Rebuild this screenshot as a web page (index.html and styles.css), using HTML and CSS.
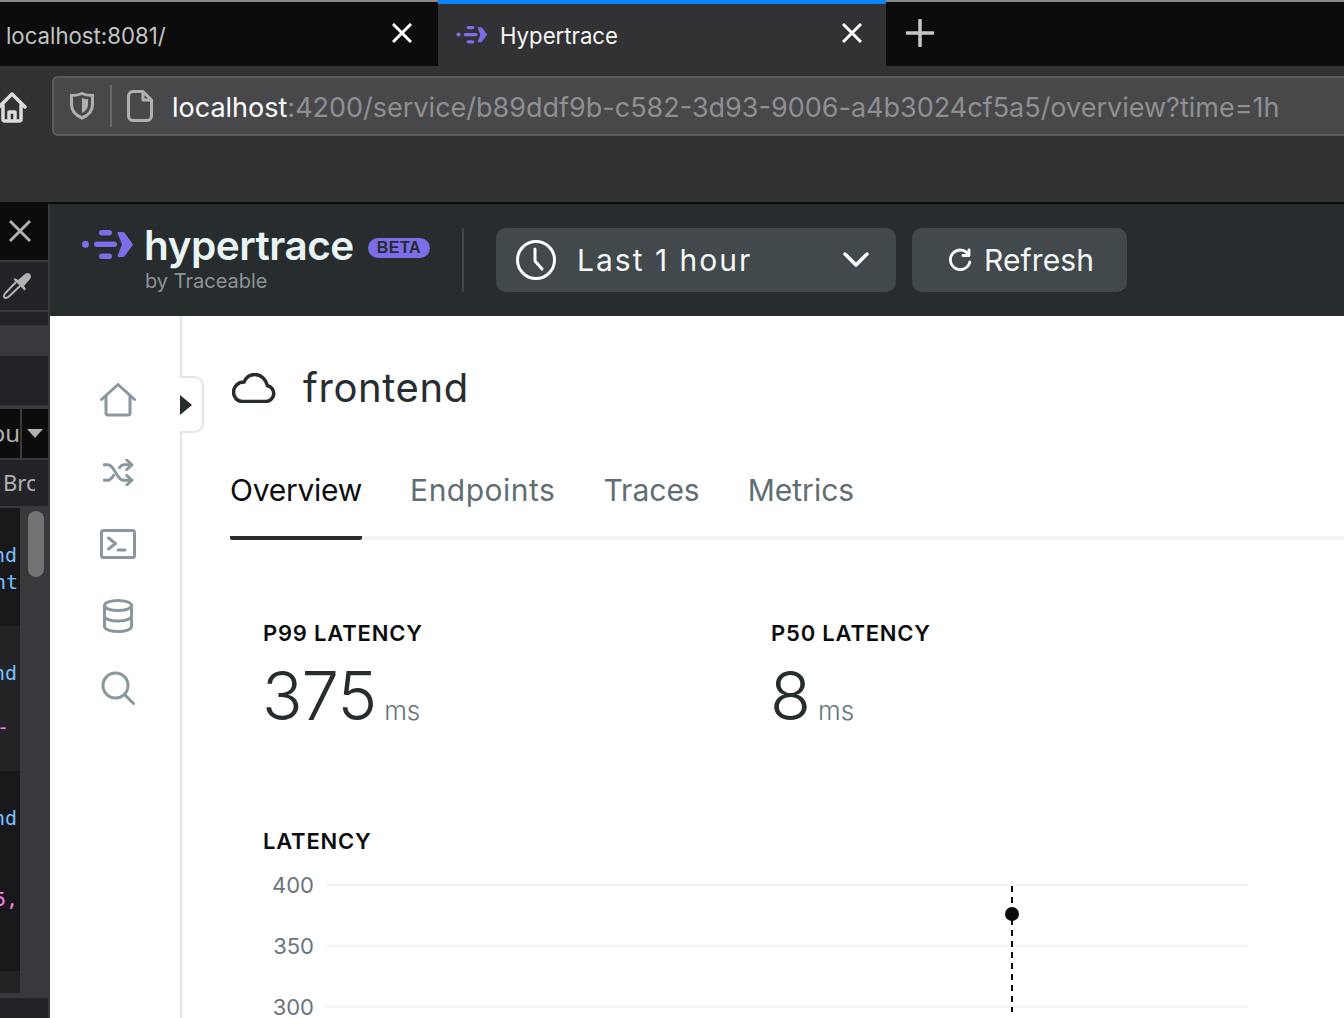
FILE: index.html
```html
<!DOCTYPE html>
<html lang="en">
<head>
<meta charset="utf-8">
<title>Hypertrace</title>
<link rel="stylesheet" href="styles.css">
</head>
<body>
<svg class="defs" width="0" height="0" aria-hidden="true">
  <symbol id="logo" viewBox="0 0 52 30">
    <circle cx="3.5" cy="14.3" r="3.5"/>
    <rect x="17" y="0" width="13" height="5.4" rx="2.7"/>
    <rect x="12" y="11.6" width="23" height="5.4" rx="2.7"/>
    <rect x="17" y="23.6" width="13" height="5.4" rx="2.7"/>
    <path d="M36.5 3h5l8.5 11.5-8.5 11.5h-5l4.500-11.500z" stroke-width="2" stroke-linejoin="round" stroke="currentColor"/>
  </symbol>
</svg>

<header class="tabbar">
  <div class="tab">
    <span class="tab-title tab-title-dim">localhost:8081/</span>
    <svg class="tab-close" viewBox="0 0 20 20"><path d="M1 1l18 18M19 1L1 19"/></svg>
  </div>
  <div class="tab tab-active">
    <svg class="tab-logo"><use href="#logo"/></svg>
    <span class="tab-title">Hypertrace</span>
    <svg class="tab-close" viewBox="0 0 20 20"><path d="M1 1l18 18M19 1L1 19"/></svg>
  </div>
  <svg class="tab-new" viewBox="0 0 28 28"><path d="M14 1v26M1 14h26"/></svg>
</header>

<div class="toolbar">
  <svg class="tool-home" viewBox="0 0 30 32"><path d="M2 16L15 3l13 13M6 14v14a2 2 0 0 0 2 2h14a2 2 0 0 0 2-2V14M12 30v-9h6v9"/></svg>
  <div class="urlbar">
    <svg class="url-shield" viewBox="0 0 24 28"><path d="M12 1.500c3 1.500 6.500 2 10.500 2v9c0 7-4.500 11-10.500 13.500C6 23.500 1.500 19.500 1.500 12.500v-9c4 0 7.500-.5 10.500-2z" fill="none"/><path d="M12 6c2 .8 4 1.200 6 1.200v5.300c0 4-2.500 6.800-6 8.500z" class="url-shield-fill"/></svg>
    <span class="url-sep"></span>
    <svg class="url-page" viewBox="0 0 26 32"><path d="M16 1.500H6A4.500 4.500 0 0 0 1.500 6v20A4.500 4.500 0 0 0 6 30.500h14a4.500 4.500 0 0 0 4.500-4.500V10zM16 1.500V10h8.500"/></svg>
    <div class="url-text"><span class="url-host">localhost</span>:4200/service/b89ddf9b-c582-3d93-9006-a4b3024cf5a5/overview?time=1h</div>
  </div>
</div>

<div class="viewport">
  <aside class="devtools">
    <div class="dt-close">
      <svg viewBox="0 0 24 24"><path d="M2 2l20 20M22 2L2 22"/></svg>
    </div>
    <div class="dt-picker">
      <svg viewBox="0 0 28 28"><path d="M13 10L3 20.500c-2 2-2.500 4-1.500 5s3 .5 5-1.500L17 14" fill="none"/><path d="M10.500 7.500l1.500-1.500 3 2 7-6c2-1.500 4-1 5 0s1.500 3 0 5l-6 7 2 3-1.500 1.500z" class="dt-picker-fill"/></svg>
    </div>
    <div class="dt-strip"></div>
    <div class="dt-selected"></div>
    <div class="dt-empty"></div>
    <div class="dt-tools">
      <span class="dt-tool-text"><span>ou</span></span>
      <span class="dt-tool-caret"><i></i></span>
    </div>
    <div class="dt-label"><span class="dt-label-text">Bro</span></div>
    <div class="dt-code">
      <div class="dt-lines">
        <div class="dt-block dt-block-dark">
          <div class="ln ln-over blue">nd-</div>
          <div class="ln blue">nt</div>
        </div>
        <div class="dt-block dt-block-light">
          <div class="ln ln-over blue">nd-</div>
          <div class="ln">&nbsp;</div>
          <div class="ln ln-dash pink">-</div>
        </div>
        <div class="dt-block dt-block-dark dt-block-tall">
          <div class="ln ln-over blue">nd-</div>
          <div class="ln">&nbsp;</div>
          <div class="ln">&nbsp;</div>
          <div class="ln pink">5,</div>
        </div>
        <div class="dt-block-end"></div>
      </div>
      <div class="dt-scroll"><div class="dt-thumb"></div></div>
    </div>
    <div class="dt-foot"></div>
  </aside>

  <div class="app">
    <div class="app-header">
      <div class="brand">
        <svg class="brand-logo"><use href="#logo"/></svg>
        <div class="brand-text">
          <div class="brand-row">
            <span class="brand-name">hypertrace</span>
            <span class="brand-beta">BETA</span>
          </div>
          <div class="brand-by">by Traceable</div>
        </div>
      </div>
      <span class="header-sep"></span>
      <button class="pill pill-time">
        <svg class="pill-clock" viewBox="0 0 40 40"><circle cx="20" cy="20" r="18.500"/><path d="M19 9v12l7 8"/></svg>
        <span class="pill-label">Last 1 hour</span>
        <svg class="pill-chevron" viewBox="0 0 26 16"><path d="M2 2l11 11L24 2"/></svg>
      </button>
      <button class="pill pill-refresh">
        <svg class="pill-refresh-icon" viewBox="0 0 24 24"><path d="M20.500 6.500A9.800 9.800 0 1 0 21.800 14M21 2v5.500h-6"/></svg>
        <span class="pill-label">Refresh</span>
      </button>
    </div>

    <div class="app-body">
      <nav class="sidenav">
        <a class="nav-item"><svg viewBox="0 0 36 34"><path d="M1.500 16.500L18 1.500l16.500 15M6 13v17a2 2 0 0 0 2 2h20a2 2 0 0 0 2-2V13"/></svg></a>
        <a class="nav-item"><svg class="nav-shuffle" viewBox="0 0 32 28"><path d="M1 6h4c7 0 9 16 16 16h8M1 22h4c2.500 0 4-2 6-5M17 9c1.500-2 2.500-3 4.500-3H29M24.500 1L30 6l-5.500 5M24.500 17l5.500 5-5.500 5"/></svg></a>
        <a class="nav-item"><svg viewBox="0 0 36 30"><rect x="1.500" y="1.500" width="33" height="27" rx="2"/><path d="M8.500 9l7 5.500-7 5.500M18 21h7"/></svg></a>
        <a class="nav-item"><svg viewBox="0 0 30 34"><ellipse cx="15" cy="6.500" rx="13.500" ry="5"/><path d="M1.500 6.500v21c0 2.800 6 5 13.500 5s13.500-2.200 13.500-5v-21M1.500 17c0 2.800 6 5 13.500 5s13.500-2.200 13.500-5"/></svg></a>
        <a class="nav-item"><svg viewBox="0 0 34 34"><circle cx="14.500" cy="14.500" r="12.500"/><path d="M23.500 23.500L32.500 32.500"/></svg></a>
        <button class="nav-toggle" aria-label="Expand"><i></i></button>
      </nav>

      <main class="content">
        <div class="title-row">
          <svg class="title-icon" viewBox="0 0 44 30"><path d="M10 28.500h24a8 8 0 0 0 1.500-15.800C34 6.500 29 1.500 23 1.500c-5 0-9 3-11 7.500C6 9 1.500 13.500 1.500 19s4 9.500 8.500 9.500z"/></svg>
          <h1 class="title">frontend</h1>
        </div>

        <div class="tabs">
          <a class="tab-link tab-link-on">Overview</a>
          <a class="tab-link tab-link-wide">Endpoints</a>
          <a class="tab-link">Traces</a>
          <a class="tab-link">Metrics</a>
        </div>

        <div class="metrics">
          <section class="metric">
            <h2 class="card-title">P99 LATENCY</h2>
            <div class="metric-value">375<span class="metric-unit">ms</span></div>
          </section>
          <section class="metric">
            <h2 class="card-title">P50 LATENCY</h2>
            <div class="metric-value">8<span class="metric-unit">ms</span></div>
          </section>
        </div>

        <section class="chart">
          <h2 class="card-title">LATENCY</h2>
          <svg class="chart-svg" viewBox="0 0 1000 150" width="1000" height="150">
            <g class="chart-grid">
              <line x1="63" x2="985" y1="15" y2="15"/>
              <line x1="63" x2="985" y1="76" y2="76"/>
              <line x1="63" x2="985" y1="137" y2="137"/>
            </g>
            <g class="chart-axis">
              <text x="51" y="23">400</text>
              <text x="51" y="84">350</text>
              <text x="51" y="145">300</text>
            </g>
            <line class="chart-cursor" x1="749" x2="749" y1="16" y2="142"/>
            <circle class="chart-dot" cx="749" cy="44" r="7"/>
          </svg>
        </section>
      </main>
    </div>
  </div>
</div>
</body>
</html>
```

FILE: styles.css
```css
* { box-sizing: border-box; }
html, body { margin: 0; padding: 0; }
body {
  width: 1344px;
  height: 1018px;
  overflow: hidden;
  display: flex;
  flex-direction: column;
  background: #fff;
  font-family: Inter, "Liberation Sans", sans-serif;
}
svg { display: block; fill: none; }
.defs { position: absolute; }

/* browser tabs */
.tabbar {
  flex: none;
  height: 66px;
  display: flex;
  background: #0c0c0d;
  border-top: 2px solid #8a8a8a;
}
.tab {
  width: 438px;
  display: flex;
  align-items: center;
  padding: 0 26px 0 6px;
}
.tab-active {
  width: 448px;
  margin-top: -2px;
  padding: 0 24px 2px 18px;
  background: #323234;
  border-top: 4px solid #0a84ff;
}
.tab-title { flex: 1; font-size: 22.2px; color: #f6f6f6; padding-top: 2px; }
.tab-title-dim { color: #c4c4c4; }
.tab-logo { width: 32px; height: 18px; margin-right: 12px; margin-top: 1px; fill: #7b6ee8; color: #7b6ee8; }
.tab-close { width: 20px; height: 20px; stroke: #fff; stroke-width: 3; margin-bottom: 2px; }
.tab-new { width: 28px; height: 28px; margin: 17px 0 0 20px; stroke: #c6c6c6; stroke-width: 3.500; stroke-linecap: round; }

/* browser toolbar */
.toolbar {
  flex: none;
  height: 138px;
  display: flex;
  align-items: flex-start;
  background: #323234;
  border-bottom: 2px solid #0c0c0d;
  padding-top: 10px;
  overflow: hidden;
}
.tool-home {
  width: 30px;
  height: 32px;
  margin: 15px 25px 0 -3px;
  flex: none;
  stroke: #dcdcdc;
  stroke-width: 3.500;
  stroke-linecap: round;
  stroke-linejoin: round;
}
.urlbar {
  flex: none;
  width: 1320px;
  height: 60px;
  display: flex;
  align-items: center;
  background: #48484b;
  border: 2px solid #5b5b5e;
  border-radius: 6px;
  padding-left: 16px;
}
.url-shield { width: 24px; height: 28px; stroke: #b0b0b2; stroke-width: 3; flex: none; }
.url-shield-fill { fill: #b0b0b2; stroke: none; }
.url-sep { flex: none; width: 2px; height: 42px; margin: 0 15px 0 16px; background: #68686b; }
.url-page { flex: none; width: 26px; height: 32px; stroke: #b0b0b2; stroke-width: 3; stroke-linejoin: round; margin-right: 19px; }
.url-text { font-size: 27px; color: #8f8f92; white-space: nowrap; padding-top: 3px; }
.url-host { color: #fff; }

/* page area */
.viewport { flex: 1; min-height: 0; display: flex; }

/* devtools strip */
.devtools {
  flex: none;
  width: 50px;
  display: flex;
  flex-direction: column;
  background: #38383d;
  padding-right: 2px;
  overflow: hidden;
}
.dt-close { height: 56px; background: #0c0c0d; display: flex; justify-content: center; align-items: center; padding-right: 8px; padding-bottom: 2px; }
.dt-close svg { width: 24px; height: 24px; stroke: #b1b1b3; stroke-width: 3; }
.dt-picker { height: 48px; margin-top: 2px; background: #232327; padding: 10px 0 0 3px; }
.dt-picker svg { width: 28px; height: 28px; stroke: #b1b1b3; stroke-width: 2; }
.dt-picker-fill { fill: #b1b1b3; stroke: none; }
.dt-strip { height: 13px; margin-top: 2px; background: #232327; }
.dt-selected { height: 31px; background: #38383d; }
.dt-empty { height: 49px; background: #232327; }
.dt-tools { height: 49px; margin-top: 4px; display: flex; gap: 2px; }
.dt-tool-text, .dt-tool-caret { background: #0c0c0d; display: flex; align-items: center; overflow: hidden; }
.dt-tool-text { width: 20px; justify-content: flex-end; color: #b1b1b3; font: 24px "Noto Sans", sans-serif; padding-bottom: 2px; }
.dt-tool-caret { flex: 1; justify-content: center; }
.dt-tool-caret i { display: block; border: 8px solid transparent; border-top: 9px solid #b1b1b3; border-bottom: 0; }
.dt-label { height: 46px; margin-top: 2px; background: #232327; color: #b1b1b3; font: 22px "Noto Sans", sans-serif; display: flex; align-items: center; padding: 0 0 2px 3px; }
.dt-label-text { width: 32px; overflow: hidden; white-space: nowrap; }
.dt-code { height: 486px; margin-top: 2px; display: flex; }
.dt-lines { width: 20px; flex: none; display: flex; flex-direction: column; overflow: hidden; }
.dt-block { padding-top: 34px; font: 20px/27px "DejaVu Sans Mono", monospace; }
.dt-block-dark { background: #18181a; height: 118px; }
.dt-block-light { background: #232326; height: 145px; }
.dt-block-tall { height: 200px; }
.dt-block-end { height: 22px; background: #232326; }
.ln { display: flex; justify-content: flex-end; white-space: nowrap; padding-right: 2px; }
.ln-over { padding-right: 0; margin-right: -9px; }
.ln-dash { justify-content: flex-start; margin-left: -3px; }
.blue { color: #75bfff; }
.pink { color: #ff7de9; }
.dt-scroll { flex: 1; background: #38383d; padding: 3px 0 0 8px; }
.dt-thumb { width: 16px; height: 66px; border-radius: 8px; background: #737373; }
.dt-foot { flex: 1; margin-top: 4px; background: #232327; }

/* app */
.app { flex: 1; min-width: 0; display: flex; flex-direction: column; }
.app-header {
  flex: none;
  height: 112px;
  display: flex;
  align-items: center;
  background: #272c2f;
  padding-left: 32px;
}
.brand { display: flex; align-items: flex-start; width: 380px; padding-top: 3px; }
.brand-logo { flex: none; width: 52px; height: 30px; margin: 0 10px 0 0; fill: #7b6ee8; color: #7b6ee8; }
.brand-text { margin-top: -6px; }
.brand-row { display: flex; align-items: center; gap: 14px; }
.brand-name { font-size: 40.500px; line-height: 44px; font-weight: 600; color: #e9f5f4; letter-spacing: -.5px; }
.brand-beta { margin-top: 4px; background: #7b6ee8; color: #272c2f; font: 700 16px/20px "Liberation Sans", sans-serif; padding: 0 9px; border-radius: 10px; letter-spacing: .5px; }
.brand-by { font-size: 20px; line-height: 26px; color: #8b9498; padding-left: 1px; }
.header-sep { flex: none; width: 2px; height: 64px; background: #3f484c; margin-right: 32px; }
.pill {
  flex: none;
  height: 64px;
  border: 0;
  border-radius: 10px;
  background: #41494c;
  display: flex;
  align-items: center;
  color: #fff;
  font-family: inherit;
}
.pill-label { font-size: 30px; letter-spacing: .1px; color: #f5f7f7; }
.pill-time { width: 400px; padding: 0 27px 0 20px; margin-right: 16px; }
.pill-time .pill-label { flex: 1; text-align: left; letter-spacing: 2px; }
.pill-clock { width: 40px; height: 40px; margin-right: 21px; stroke: #fff; stroke-width: 3; stroke-linecap: round; stroke-linejoin: round; }
.pill-chevron { width: 26px; height: 16px; stroke: #fff; stroke-width: 3.500; stroke-linecap: round; stroke-linejoin: round; }
.pill-refresh { width: 215px; padding-left: 36px; }
.pill-refresh-icon { width: 24px; height: 24px; margin-right: 12px; stroke: #fff; stroke-width: 2.800; stroke-linecap: round; stroke-linejoin: round; }

.app-body { flex: 1; min-height: 0; display: flex; }

/* side nav */
.sidenav {
  flex: none;
  position: relative;
  width: 132px;
  border-right: 2px solid #e3e6e8;
  padding-top: 48px;
  display: flex;
  flex-direction: column;
}
.nav-item { height: 72px; width: 136px; display: flex; align-items: center; justify-content: center; }
.nav-item svg { height: 34px; width: 36px; stroke: #8a989e; stroke-width: 3; stroke-linecap: round; stroke-linejoin: round; }
.nav-item .nav-shuffle { width: 31px; height: 27px; }
.nav-toggle {
  position: absolute;
  left: 130px;
  top: 60px;
  width: 24px;
  height: 57px;
  padding: 0;
  background: #fff;
  border: 2px solid #e3e6e8;
  border-left: 0;
  border-radius: 0 10px 10px 0;
  display: flex;
  align-items: center;
}
.nav-toggle i { display: block; border: 10px solid transparent; border-left: 12px solid #272c2f; border-right: 0; margin-left: 0; }

/* content */
.content { flex: 1; min-width: 0; padding: 50px 0 0 50px; }
.title-row { display: flex; align-items: center; height: 44px; }
.title-icon { flex: none; width: 44px; height: 30px; margin-right: 27px; stroke: #272c2f; stroke-width: 3.500; }
.title { margin: 0; font-size: 40px; line-height: 44px; font-weight: 400; color: #272c2f; letter-spacing: .6px; }
.tabs { display: flex; gap: 48px; margin-top: 58px; margin-left: -2px; border-bottom: 4px solid #f2f4f5; height: 72px; }
.tab-link { height: 72px; font-size: 30px; line-height: 44px; color: #616d73; }
.tab-link-wide { letter-spacing: .5px; }
.tab-link-on { color: #0c0d0e; border-bottom: 4px solid #272c2f; border-radius: 0 0 2px 2px; letter-spacing: -.25px; }
.metrics { display: flex; margin: 78px 0 0 31px; }
.metric { width: 508px; }
.card-title { margin: 0; font-size: 22px; line-height: 30px; font-weight: 600; color: #0c0d0e; letter-spacing: .8px; }
.metric-value { margin: 6px 0 0 -1px; font-size: 67px; line-height: 84px; font-weight: 300; color: #272c2f; letter-spacing: -1px; }
.metric-unit { font-size: 26px; font-weight: 300; color: #68757c; margin-left: 8px; letter-spacing: 0; }
.chart { margin: 73px 0 0 31px; }
.chart-svg { margin-top: 14px; overflow: visible; }
.chart-grid line { stroke: #f3f4f5; stroke-width: 2; }
.chart-axis text { font-size: 22px; fill: #68757c; text-anchor: end; }
.chart-cursor { stroke: #0c0d0e; stroke-width: 2; stroke-dasharray: 6 5; }
.chart-dot { fill: #0c0d0e; }
```
